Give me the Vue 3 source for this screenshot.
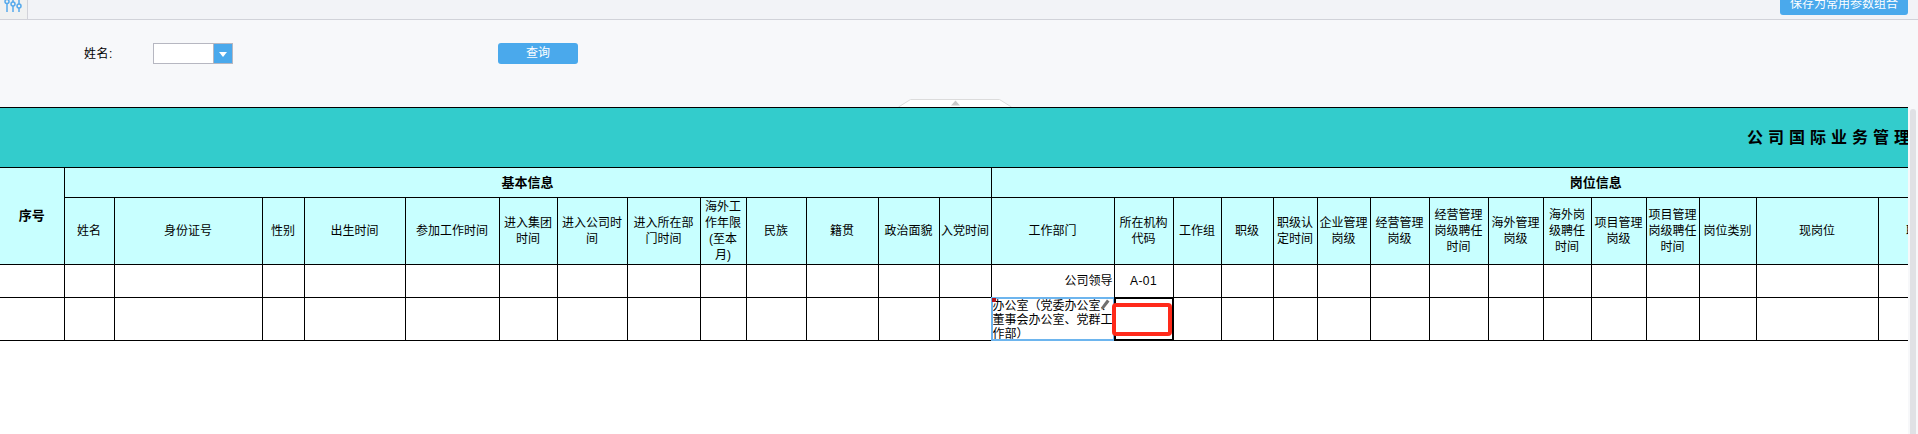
<script setup>
const edges = [0,64,114,262,304,405,499,557,627,700,746,806,878,939,991,1114,1173,1221,1273,1317,1370,1429,1488,1543,1591,1646,1699,1756,1878,1958,2080,2200]
const widths = edges.slice(1).map((e, i) => e - edges[i])
const heads = [
  ['姓名'], ['身份证号'], ['性别'], ['出生时间'], ['参加工作时间'], ['进入集团','时间'], ['进入公司时','间'],
  ['进入所在部','门时间'], ['海外工','作年限','(至本','月)'], ['民族'], ['籍贯'], ['政治面貌'], ['入党时间'],
  ['工作部门'], ['所在机构','代码'], ['工作组'], ['职级'], ['职级认','定时间'], ['企业管理','岗级'], ['经营管理','岗级'],
  ['经营管理','岗级聘任','时间'], ['海外管理','岗级'], ['海外岗','级聘任','时间'], ['项目管理','岗级'], ['项目管理','岗级聘任','时间'],
  ['岗位类别'], ['现岗位'], ['职务'], ['备注'], ['其他']
]
const deptIndex = 14
const codeIndex = 15
</script>

<template>
  <div class="page">
    <header class="topbar">
      <div class="tab">
        <svg class="sliders" width="24" height="19" viewBox="0 0 24 19" fill="none" stroke="#55a9ec" stroke-width="1.5">
          <path d="M7 4v8M13 0v2M13 6v6M19 0v4M19 8v4"/>
          <circle cx="7" cy="1.5" r="2"/>
          <circle cx="13" cy="4" r="2"/>
          <circle cx="19" cy="6" r="2"/>
        </svg>
      </div>
      <div class="bar-fill">
        <button class="btn save">保存为常用参数组合</button>
      </div>
    </header>

    <section class="form">
      <label class="label">姓名:</label>
      <div class="select">
        <div class="select-input"></div>
        <div class="select-arrow"><span class="tri"></span></div>
      </div>
      <button class="btn query">查询</button>
      <svg class="collapse" width="114" height="8" viewBox="0 0 114 8">
        <path d="M0.5 8L12.5 0.5H101.5L113.5 8" fill="#fff" stroke="#dcdcdc"/>
        <path d="M53 6.5L57.5 1.5L62 6.5Z" fill="#c9c9c9"/>
      </svg>
    </section>

    <main class="content">
      <div class="sheet">
        <table class="grid">
          <colgroup>
            <col v-for="(w, i) in widths" :key="i" :style="{ width: w + 'px' }" />
          </colgroup>
          <tbody>
            <tr class="r-title">
              <td class="title" :colspan="widths.length">公司国际业务管理</td>
            </tr>
            <tr class="r-group">
              <th class="seq first" rowspan="2">序号</th>
              <th class="group" colspan="13">基本信息</th>
              <th class="group" colspan="17">岗位信息</th>
            </tr>
            <tr class="r-head">
              <th v-for="(h, i) in heads" :key="i" class="head">
                <div v-for="line in h" :key="line">{{ line }}</div>
              </th>
            </tr>
            <tr class="r-one">
              <td v-for="(w, i) in widths" :key="i" :class="{ first: i === 0, right: i === deptIndex, center: i === codeIndex, codeval: i === codeIndex }">
                <template v-if="i === deptIndex">公司领导</template>
                <template v-else-if="i === codeIndex">A-01</template>
              </td>
            </tr>
            <tr class="r-two">
              <td v-for="(w, i) in widths" :key="i" :class="{ first: i === 0, dept: i === deptIndex, code: i === codeIndex }">
                <template v-if="i === deptIndex">
                  <span class="frame blue"></span>
                  <span class="marker"></span>
                  <div class="dept-text">办公室（党委办公室、董事会办公室、党群工作部）</div>
                  <svg class="pencil" width="9" height="11" viewBox="0 0 9 11">
                    <path d="M6 0.5L8.5 2.5L3 9.5L0.5 10.5L0.8 7.5Z" fill="#6f6f6f"/>
                  </svg>
                </template>
                <template v-else-if="i === codeIndex">
                  <span class="frame black"></span>
                  <span class="annot"></span>
                </template>
              </td>
            </tr>
          </tbody>
        </table>
      </div>
      <div class="scroll"><div class="thumb"></div></div>
    </main>
  </div>
</template>

<style>
html, body { margin: 0; padding: 0; background: #f7f8fa; overflow: hidden; }
</style>

<style scoped>
.page {
  width: 1918px;
  height: 434px;
  display: flex;
  flex-direction: column;
  overflow: hidden;
  font-family: "Liberation Sans", "Noto Sans CJK SC", sans-serif;
  font-size: 12px;
  color: #000;
  background: #f7f8fa;
}
.topbar {
  height: 19px;
  flex: none;
  display: flex;
  background: #f2f3f7;
  border-bottom: 1px solid #d1d2d9;
}
.tab {
  width: 27px;
  flex: none;
  background: #f0f1f1;
  border-right: 1px solid #d1d2d9;
  overflow: hidden;
}
.sliders { display: block; }
.bar-fill {
  flex: 1;
  display: flex;
  justify-content: flex-end;
  align-items: flex-end;
  padding: 0 10px 4px 0;
  overflow: hidden;
}
.btn {
  border: 0;
  padding: 0;
  background: #4aa9ec;
  color: #fff;
  font: inherit;
  border-radius: 3px;
  height: 21px;
  line-height: 21px;
  text-align: center;
}
.save { width: 128px; flex: none; }
.form {
  position: relative;
  height: 87px;
  flex: none;
  box-sizing: border-box;
  padding: 23px 0 0 84px;
  display: flex;
  align-items: flex-start;
}
.label { width: 69px; height: 21px; line-height: 23px; letter-spacing: 0.5px; }
.select {
  width: 80px;
  height: 21px;
  box-sizing: border-box;
  border: 1px solid #b6b7c1;
  display: flex;
  margin-right: 265px;
}
.select-input { flex: 1; background: #fff; border-right: 1px solid #b6b7c1; }
.select-arrow {
  width: 18px;
  background: #4aa9ec;
  display: flex;
  align-items: center;
  justify-content: center;
}
.tri {
  width: 0;
  height: 0;
  border-left: 4px solid transparent;
  border-right: 4px solid transparent;
  border-top: 5px solid #fff;
  margin-top: 2px;
}
.query { width: 80px; }
.collapse { position: absolute; left: 898px; bottom: 0; display: block; }
.content { flex: 1; display: flex; min-height: 0; }
.sheet { width: 1908px; flex: none; background: #fff; overflow: hidden; }
.scroll { flex: 1; padding: 2px 2px 0 2px; }
.thumb { height: 100%; background: #e0e1e5; border-radius: 3px 3px 0 0; }
.grid {
  border-collapse: collapse;
  table-layout: fixed;
  width: 2200px;
  background: #fff;
}
.grid td, .grid th {
  border: 1px solid #000;
  padding: 0;
  text-align: center;
  vertical-align: middle;
  font-weight: normal;
  line-height: 16px;
}
.grid td.first, .grid th.first { border-left: 0; }
.r-title { height: 60px; }
.r-group { height: 30px; }
.r-head { height: 67px; }
.r-one { height: 33px; }
.r-two { height: 43px; }
.grid td.title {
  background: #33cccc;
  font-size: 16px;
  font-weight: bold;
  letter-spacing: 5px;
  text-align: left;
  padding-left: 1747px;
  white-space: nowrap;
  border-left: 0;
}
.grid th.group, .grid th.seq { background: #c8ffff; font-size: 13px; font-weight: bold; }
.grid th.head { background: #c8ffff; white-space: nowrap; overflow: hidden; }
.grid td.right { text-align: right; padding-right: 1px; }
.grid td.codeval { letter-spacing: 0.4px; }
.grid td.dept, .grid td.code { position: relative; }
.grid td.dept { text-align: left; vertical-align: top; }
.dept-text { line-height: 14px; padding: 1px 0 0 1px; height: 42px; overflow: hidden; box-sizing: border-box; }
.frame { position: absolute; left: -1px; top: -1px; right: -1px; bottom: -1px; border-style: solid; border-width: 2px; pointer-events: none; }
.frame.blue { border-color: #6db5ee; }
.frame.black { border-color: #000; }
.marker { position: absolute; left: 0; top: 0; width: 4px; height: 4px; background: #b5121b; }
.pencil { position: absolute; right: 4px; top: 1px; display: block; }
.annot {
  position: absolute;
  left: -3px;
  top: 5px;
  width: 60px;
  height: 33px;
  box-sizing: border-box;
  border: 4px solid #ff2a1a;
  border-radius: 4px;
}
</style>
